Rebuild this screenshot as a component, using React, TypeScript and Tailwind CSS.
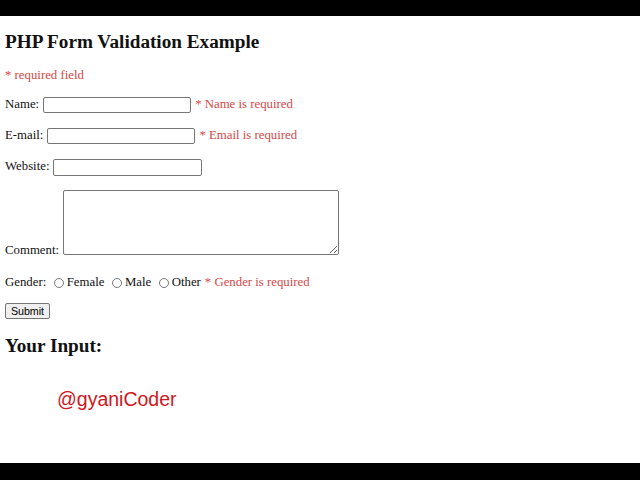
import React from 'react'

const serif = { fontFamily: '"Liberation Serif", "Times New Roman", serif' }

function ErrorText({ children }: { children: React.ReactNode }) {
    return <span className="text-[#d64848] pb-[2px]">{children}</span>
}

function Radio({ label }: { label: string }) {
    return (
        <label className="flex items-center">
            <input
                type="radio"
                name="gender"
                className="appearance-none w-[10px] h-[10px] rounded-full border border-[#767676] bg-white mr-[2.5px]"
            />
            <span>{label}</span>
        </label>
    )
}

export default function App() {
    return (
        <div className="w-[640px] h-[480px] flex flex-col bg-white text-[12.8px] leading-[15px] text-[#111]" style={serif}>
            <div className="h-[16px] bg-black shrink-0" />

            <main className="flex-1 px-[5px] flex flex-col items-start">
                <h2 className="mt-[15px] text-[19.2px] leading-[22px] font-bold">PHP Form Validation Example</h2>

                <p className="mt-[15px] text-[#d64848]">* required field</p>

                <form className="flex flex-col items-start" onSubmit={(e) => e.preventDefault()}>
                    <div className="mt-[14px] h-[16px] flex items-center gap-[4px]">
                        <span className="pb-[2px]">Name:</span>
                        <input type="text" className="w-[148px] h-[16px] border border-[#767676] rounded-[2px]" />
                        <ErrorText>* Name is required</ErrorText>
                    </div>

                    <div className="mt-[15px] h-[16px] flex items-center gap-[4px]">
                        <span className="pb-[2px]">E-mail:</span>
                        <input type="text" className="w-[148px] h-[16px] border border-[#767676] rounded-[2px]" />
                        <ErrorText>* Email is required</ErrorText>
                    </div>

                    <div className="mt-[15px] h-[17px] flex items-center gap-[4px]">
                        <span className="pb-[2px]">Website:</span>
                        <input type="text" className="w-[149px] h-[17px] border border-[#767676] rounded-[2px]" />
                    </div>

                    <div className="mt-[14px] flex items-end gap-[4px]">
                        <span className="-mb-[3px]">Comment:</span>
                        <textarea className="w-[276px] h-[65px] border border-[#767676] rounded-[2px]" />
                    </div>

                    <div className="mt-[20px] h-[15px] flex items-center gap-[8px]">
                        <span>Gender:</span>
                        <Radio label="Female" />
                        <Radio label="Male" />
                        <div className="flex items-center gap-[4px]">
                            <Radio label="Other" />
                            <span className="text-[#d64848]">* Gender is required</span>
                        </div>
                    </div>

                    <button
                        type="submit"
                        className="mt-[13px] w-[45px] h-[16px] bg-[#efefef] border border-[#767676] rounded-[2px] text-[10.67px] leading-[14px] text-black"
                        style={{ fontFamily: '"Liberation Sans", Arial, sans-serif' }}
                    >
                        Submit
                    </button>
                </form>

                <h2 className="mt-[16px] text-[19.2px] leading-[22px] font-bold">Your Input:</h2>

                <p
                    className="mt-[31px] ml-[52px] text-[19.5px] leading-[22px] text-[#d0161c]"
                    style={{ fontFamily: '"Liberation Sans", Arial, sans-serif' }}
                >
                    @gyaniCoder
                </p>
            </main>

            <div className="h-[17px] bg-black shrink-0" />
        </div>
    )
}
